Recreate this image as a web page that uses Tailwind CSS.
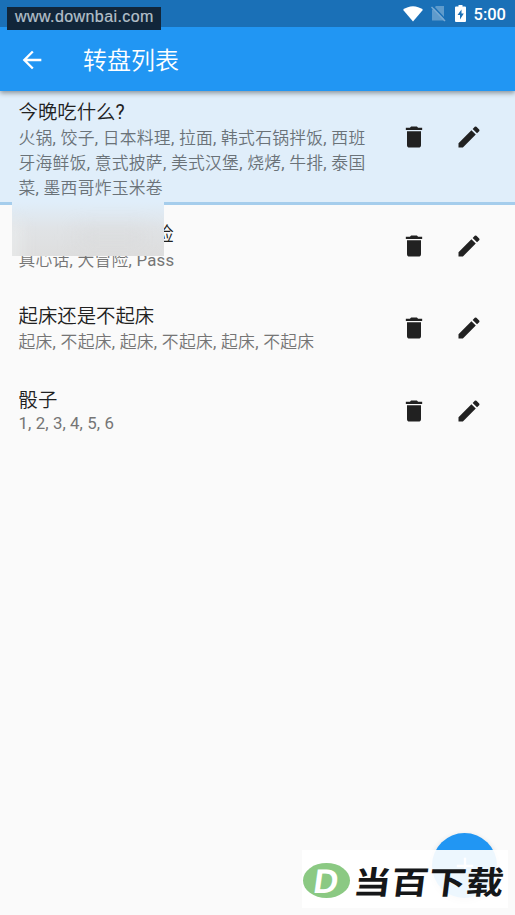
<!DOCTYPE html>
<html lang="zh-CN">
<head>
<meta charset="utf-8">
<title>转盘列表</title>
<script src="https://cdn.jsdelivr.net/npm/@tailwindcss/browser@4"></script>
</head>
<body class="relative w-[515px] h-[915px] overflow-hidden bg-[#fafafa] font-[Roboto,'Noto_Sans_CJK_SC_DemiLight','Noto_Sans_CJK_SC',sans-serif] text-[#212121]">
<svg class="hidden">
  <symbol id="trash" viewBox="0 0 24 24"><path d="M6 19c0 1.1.9 2 2 2h8c1.100 0 2-.9 2-2V7H6v12zM19 4h-3.500l-1-1h-5l-1 1H5v2h14V4z"/></symbol>
  <symbol id="edit" viewBox="0 0 24 24"><path d="M3 17.250V21h3.750L17.810 9.940l-3.750-3.750L3 17.250zM20.710 7.040c.39-.39.39-1.020 0-1.410l-2.340-2.340a1 1 0 0 0-1.410 0l-1.830 1.830 3.750 3.750 1.830-1.830z"/></symbol>
</svg>

<header class="relative z-10 bg-[#2196f3] shadow-[0_2px_5px_rgba(0,0,0,0.4)]">
  <div class="flex h-[27px] items-center justify-end bg-[#1a70b7] pr-[9px] text-white">
    <svg class="h-[16px] w-[20px] mr-[8px]" viewBox="0 0 20 16" fill="currentColor"><path d="M0 3.800C6-1 14-1 20 3.800L10 15.500z"/></svg>
    <svg class="h-[17px] w-[15px] mr-[9px]" viewBox="0 0 15 17"><path d="M5 1h8v14.500H1V5z" fill="#fff" fill-opacity=".3"/><path d="M1 0L15 15" stroke="#1a70b7" stroke-width="1.500"/><path d="M.5 2L14 16" stroke="#78a9d3" stroke-width="1.500"/></svg>
    <svg class="h-[17px] w-[11px] mr-[8px]" viewBox="0 0 11 17"><path d="M3.500 0h4v1.500H10q1 0 1 1V16q0 1-1 1H1q-1 0-1-1V2.500q0-1 1-1h2.500z" fill="#fff"/><path d="M6.500 4.500L2.500 10H5v4.500L8.800 8.500H6.500z" fill="#1a70b7"/></svg>
    <span class="text-[16.500px] leading-[27px] font-medium pt-[2px]">5:00</span>
  </div>
  <div class="flex h-[64px] items-center pl-[18px] pt-px text-white">
    <svg class="size-[28px]" viewBox="0 0 24 24" fill="currentColor"><path d="M20 11H7.830l5.590-5.590L12 4l-8 8 8 8 1.410-1.410L7.830 13H20v-2z"/></svg>
    <h1 class="ml-[37px] pt-[3px] text-[24px] leading-[32px]">转盘列表</h1>
  </div>
</header>

<main>
  <section class="flex h-[114px] items-start border-b-[3px] border-[#a5cdec] bg-[#e0eefa] pl-[18.500px] pr-[32px] pt-[8px]">
    <div class="w-[350px] shrink-0">
      <h2 class="text-[19.400px] leading-[28px]">今晚吃什么?</h2>
      <p class="-mt-px text-[16.800px] leading-[25px] tracking-[0.27px] text-[#6a7278]">火锅, 饺子, 日本料理, 拉面, 韩式石锅拌饭, 西班<br>牙海鲜饭, 意式披萨, 美式汉堡, 烧烤, 牛排, 泰国<br>菜, 墨西哥炸玉米卷</p>
    </div>
    <div class="ml-auto mt-[24px] flex gap-[27px]"><svg class="size-[28px]" fill="currentColor"><use href="#trash"/></svg><svg class="size-[28px]" fill="currentColor"><use href="#edit"/></svg></div>
  </section>
  <section class="flex h-[82px] items-center pl-[18.500px] pr-[32px]">
    <div>
      <h2 class="text-[19.400px] leading-[28px]">真心话还是大冒险</h2>
      <p class="-mt-px text-[16.800px] leading-[24px] tracking-[0.24px] text-[#757575]">真心话, 大冒险, Pass</p>
    </div>
    <div class="ml-auto flex gap-[27px]"><svg class="size-[28px]" fill="currentColor"><use href="#trash"/></svg><svg class="size-[28px]" fill="currentColor"><use href="#edit"/></svg></div>
  </section>
  <section class="flex h-[82px] items-center pl-[18.500px] pr-[32px]">
    <div>
      <h2 class="pt-px text-[19.400px] leading-[28px]">起床还是不起床</h2>
      <p class="-mt-px text-[16.800px] leading-[25px] tracking-[0.27px] text-[#757575]">起床, 不起床, 起床, 不起床, 起床, 不起床</p>
    </div>
    <div class="ml-auto flex gap-[27px]"><svg class="size-[28px]" fill="currentColor"><use href="#trash"/></svg><svg class="size-[28px]" fill="currentColor"><use href="#edit"/></svg></div>
  </section>
  <section class="flex h-[83px] items-center pl-[18.500px] pr-[32px]">
    <div class="pb-[2px]">
      <h2 class="pt-px text-[19.400px] leading-[28px]">骰子</h2>
      <p class="-mt-[3px] text-[16.800px] leading-[22px] tracking-[0.1px] text-[#757575]">1, 2, 3, 4, 5, 6</p>
    </div>
    <div class="ml-auto flex gap-[27px]"><svg class="size-[28px]" fill="currentColor"><use href="#trash"/></svg><svg class="size-[28px]" fill="currentColor"><use href="#edit"/></svg></div>
  </section>
</main>

<div class="absolute left-[12px] top-[202px] h-[54px] w-[152px] overflow-hidden bg-linear-to-b from-[#e0eefa] via-[#e0e3e6] via-50% to-[#dedede]">
  <div class="absolute -left-[20px] top-[20px] h-[50px] w-[30px] bg-[#f0f1f2]/50 blur-[8px]"></div>
  <div class="absolute left-[65px] top-[28px] h-[14px] w-[70px] bg-[#d2d2d2]/40 blur-[10px]"></div>
</div>

<div class="absolute left-[7px] top-[7px] z-20 h-[23px] w-[154px] bg-[#11263a] pl-[8px] font-['Liberation_Sans',sans-serif] text-[16px] leading-[19px] tracking-[0.42px] text-[#b4c0ca] [-webkit-text-stroke:0.2px_#b4c0ca]">www.downbai.com</div>

<button class="absolute left-[432px] top-[833px] flex size-[65px] items-center justify-center rounded-full bg-[#2196f3] text-white shadow-[0_3px_6px_rgba(0,0,0,0.2)]">
  <svg class="size-[28px]" viewBox="0 0 24 24" fill="currentColor"><path d="M19 13h-6v6h-2v-6H5v-2h6V5h2v6h6z"/></svg>
</button>
<div class="absolute left-[302px] top-[850px] flex h-[58px] w-[206px] items-center bg-white/92">
  <div class="ml-[1px] mt-[3px] flex h-[35px] w-[47px] items-center justify-center rounded-[50%] bg-[#8bc983]"><span class="inline-block -skew-x-8 pt-px font-['Liberation_Sans',sans-serif] text-[34px] leading-[35px] font-bold text-white">D</span></div>
  <div class="ml-[4px] mt-px origin-center -skew-x-6 scale-y-85 whitespace-nowrap font-['Noto_Sans_CJK_SC',sans-serif] text-[37.500px] leading-[58px] font-bold text-[#151719]">当百下载</div>
</div>
</body>
</html>
